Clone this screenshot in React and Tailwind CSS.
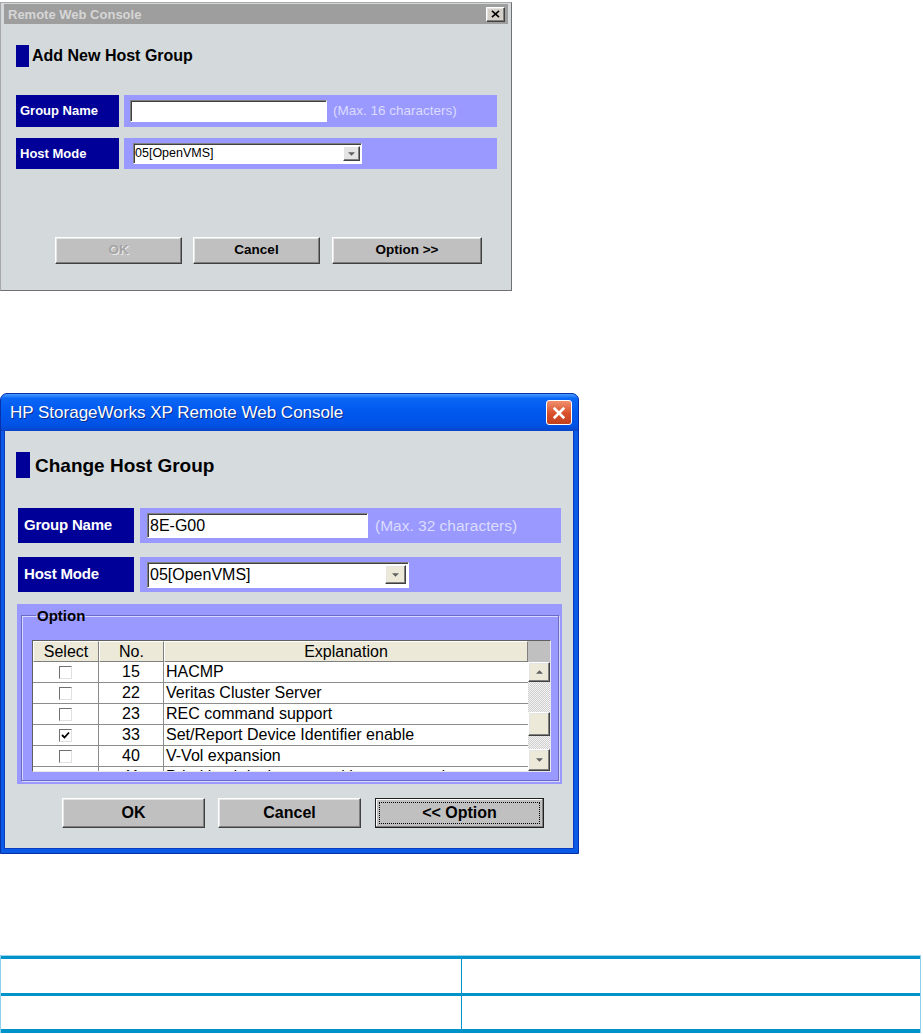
import React from 'react';

const raised =
  'border border-t-white border-l-white border-r-[#404040] border-b-[#404040] shadow-[inset_-1px_-1px_0_#808080,inset_1px_1px_0_#e4e4e4]';
const sunken =
  'border border-t-[#808080] border-l-[#808080] border-r-white border-b-white shadow-[inset_1px_1px_0_#404040]';

function Arrow({ up = false, size = 'small' }) {
  const cls = size === 'small' ? 'w-[7px] h-[4px]' : 'w-[9px] h-[5px]';
  return (
    <svg viewBox="0 0 8 4" className={cls} fill="#606060">
      {up ? <path d="M0 4 L4 0 L8 4 Z" /> : <path d="M0 0 L8 0 L4 4 Z" />}
    </svg>
  );
}

function Checkbox({ checked }) {
  return (
    <div className="w-[13px] h-[13px] bg-white border border-t-[#707070] border-l-[#707070] border-r-[#e0e0e0] border-b-[#e0e0e0] flex items-center justify-center">
      {checked && (
        <svg viewBox="0 0 9 9" className="w-[9px] h-[9px]">
          <path d="M1 4 L3.5 6.5 L8 1.5" stroke="#000" strokeWidth="1.8" fill="none" />
        </svg>
      )}
    </div>
  );
}

function FieldRow({ label, children, labelClass, stripClass, rowClass }) {
  return (
    <div className={`flex ${rowClass}`}>
      <div className={`bg-[#000099] text-white font-bold flex items-center ${labelClass}`}>{label}</div>
      <div className={`bg-[#9999ff] flex items-center ${stripClass}`}>{children}</div>
    </div>
  );
}

function AddDialog() {
  return (
    <div className="w-[512px] h-[289px] border border-[#a8a8a8] border-r-[#707070] border-b-[#707070] bg-[#d4d9dc] px-[3px] pt-[1px]">
      <div className="h-[20px] bg-[#9e9e9e] flex items-center justify-between pl-[4px] pr-[3px]">
        <span className="text-[13px] font-bold text-[#d6d6d6] leading-none">Remote Web Console</span>
        <div className={`w-[19px] h-[15px] bg-[#d4d0c8] flex items-center justify-center ${raised}`}>
          <svg viewBox="0 0 10 9" className="w-[9px] h-[8px]">
            <path d="M1 1 L9 8 M9 1 L1 8" stroke="#000" strokeWidth="1.8" />
          </svg>
        </div>
      </div>

      <div className="mt-[21px] ml-[12px] h-[22px] flex items-center gap-[3px]">
        <div className="w-[13px] h-[22px] bg-[#000099]" />
        <span className="text-[16px] font-bold text-black leading-none">Add New Host Group</span>
      </div>

      <FieldRow
        label="Group Name"
        rowClass="mt-[28px] h-[32px]"
        labelClass="ml-[12px] w-[103px] pl-[4px] text-[13px]"
        stripClass="ml-[5px] w-[373px] pl-[6px]"
      >
        <div className={`w-[197px] h-[22px] bg-white ${sunken}`} />
        <span className="ml-[6px] text-[13.5px] text-[#dcdcff]">(Max. 16 characters)</span>
      </FieldRow>

      <FieldRow
        label="Host Mode"
        rowClass="mt-[11px] h-[31px]"
        labelClass="ml-[12px] w-[103px] pl-[4px] text-[13px]"
        stripClass="ml-[5px] w-[373px] pl-[9px]"
      >
        <div className={`w-[229px] h-[21px] bg-white flex items-center justify-between pl-[1px] pr-[1px] ${sunken}`}>
          <span className="text-[12.5px] text-black">05[OpenVMS]</span>
          <div className={`w-[17px] h-[15px] bg-[#e4e4e4] flex items-center justify-center ${raised}`}>
            <Arrow />
          </div>
        </div>
      </FieldRow>

      <div className="mt-[68px] ml-[51px] flex h-[27px] text-[13.5px] font-bold">
        <div className={`w-[127px] bg-[#c0c0c0] flex items-center justify-center text-[#a4a4a4] [text-shadow:1px_1px_0_#ececec] ${raised}`}>
          OK
        </div>
        <div className={`ml-[11px] w-[127px] bg-[#c0c0c0] flex items-center justify-center text-black ${raised}`}>
          Cancel
        </div>
        <div className={`ml-[12px] w-[150px] bg-[#c0c0c0] flex items-center justify-center text-black ${raised}`}>
          Option &gt;&gt;
        </div>
      </div>
    </div>
  );
}

const rows = [
  { no: 15, text: 'HACMP', checked: false },
  { no: 22, text: 'Veritas Cluster Server', checked: false },
  { no: 23, text: 'REC command support', checked: false },
  { no: 33, text: 'Set/Report Device Identifier enable', checked: true },
  { no: 40, text: 'V-Vol expansion', checked: false },
  { no: 41, text: 'Prioritized device recognition command', checked: false },
];

function OptionTable() {
  return (
    <div className="w-[519px] h-[132px] border border-t-[#606060] border-l-[#606060] border-r-[#e8e8e8] border-b-[#e8e8e8] bg-white flex text-[16px] text-black">
      <div className="w-[495px] flex flex-col overflow-hidden">
        <div className="h-[21px] flex shrink-0">
          <div className="w-[66px] bg-[#ece9d8] border border-t-white border-l-white border-r-[#808080] border-b-[#808080] flex items-center justify-center">
            Select
          </div>
          <div className="w-[65px] bg-[#ece9d8] border border-t-white border-l-white border-r-[#808080] border-b-[#808080] flex items-center justify-center">
            No.
          </div>
          <div className="flex-1 bg-[#ece9d8] border border-t-white border-l-white border-r-[#808080] border-b-[#808080] flex items-center justify-center">
            Explanation
          </div>
        </div>
        {rows.map((r) => (
          <div key={r.no} className="h-[21px] shrink-0 flex border-b border-[#8c8c8c]">
            <div className="w-[66px] border-r border-[#8c8c8c] flex items-center justify-center">
              <Checkbox checked={r.checked} />
            </div>
            <div className="w-[65px] border-r border-[#8c8c8c] flex items-center justify-center">{r.no}</div>
            <div className="flex-1 flex items-center pl-[2px] whitespace-nowrap">{r.text}</div>
          </div>
        ))}
      </div>
      <div className="w-[22px] flex flex-col">
        <div className="h-[21px] bg-[#c0c0c0] shrink-0" />
        <div className={`h-[20px] bg-[#ece9d8] flex items-center justify-center ${raised}`}>
          <Arrow up />
        </div>
        <div className="h-[30px] bg-[repeating-conic-gradient(#cfcfcf_0_25%,#f3f3f3_0_50%)] bg-[length:2px_2px]" />
        <div className={`h-[24px] bg-[#ece9d8] ${raised}`} />
        <div className="h-[13px] bg-[repeating-conic-gradient(#cfcfcf_0_25%,#f3f3f3_0_50%)] bg-[length:2px_2px]" />
        <div className={`h-[22px] bg-[#ece9d8] flex items-center justify-center ${raised}`}>
          <Arrow />
        </div>
      </div>
    </div>
  );
}

function ChangeDialog() {
  return (
    <div className="w-[579px] h-[461px] bg-[#0a5ae6] border border-[#0831a8] rounded-t-[7px] flex flex-col">
      <div className="h-[37px] rounded-t-[6px] bg-[linear-gradient(to_bottom,#4a9bff_0%,#0a66f5_12%,#0058ee_50%,#0052e4_85%,#0a44c8_100%)] flex items-center justify-between pl-[9px] pr-[6px]">
        <span className="text-[17px] text-white [text-shadow:1px_1px_0_#0a2a8a]">HP StorageWorks XP Remote Web Console</span>
        <div className="w-[26px] h-[25px] rounded-[3px] border border-white bg-[linear-gradient(to_bottom,#f0906e,#d8502a_55%,#c3401c)] flex items-center justify-center">
          <svg viewBox="0 0 12 12" className="w-[14px] h-[14px]">
            <path d="M1.5 1.5 L10.5 10.5 M10.5 1.5 L1.5 10.5" stroke="#fff" strokeWidth="2.2" />
          </svg>
        </div>
      </div>

      <div className="ml-[3px] mr-[4px] mb-[4px] flex-1 bg-[#d6dbde] border-l border-r border-b border-[#0a3cc0]">
        <div className="mt-[21px] ml-[11px] h-[26px] flex items-center gap-[5px]">
          <div className="w-[14px] h-[26px] bg-[#000099]" />
          <span className="text-[19px] font-bold text-black leading-none">Change Host Group</span>
        </div>

        <FieldRow
          label="Group Name"
          rowClass="mt-[30px] h-[35px]"
          labelClass="ml-[13px] w-[116px] pl-[6px] text-[15px] tracking-[-0.2px]"
          stripClass="ml-[6px] w-[421px] pl-[7px]"
        >
          <div className={`w-[221px] h-[25px] bg-white flex items-center pl-[2px] ${sunken}`}>
            <span className="text-[16px] text-black">8E-G00</span>
          </div>
          <span className="ml-[7px] text-[15.5px] text-[#dcdcff]">(Max. 32 characters)</span>
        </FieldRow>

        <FieldRow
          label="Host Mode"
          rowClass="mt-[14px] h-[35px]"
          labelClass="ml-[13px] w-[116px] pl-[6px] text-[15px] tracking-[-0.2px]"
          stripClass="ml-[6px] w-[421px] pl-[7px]"
        >
          <div className={`w-[262px] h-[26px] bg-white flex items-center justify-between pl-[2px] pr-[2px] ${sunken}`}>
            <span className="text-[16px] text-black">05[OpenVMS]</span>
            <div className={`w-[21px] h-[19px] bg-[#ece9d8] flex items-center justify-center ${raised}`}>
              <Arrow />
            </div>
          </div>
        </FieldRow>

        <div className="mt-[12px] ml-[12px] w-[545px] h-[180px] bg-[#9999ff] pt-[3px] pl-[4px]">
          <fieldset className="w-[538px] h-[174px] border border-[#6b6bc4] shadow-[inset_1px_1px_0_#d8d8ff,1px_1px_0_#d8d8ff] pl-[10px] pt-[16px]">
            <legend className="ml-[4px] px-[1px] text-[15px] font-bold text-black leading-[17px]">Option</legend>
            <OptionTable />
          </fieldset>
        </div>

        <div className="mt-[14px] ml-[57px] flex h-[30px] text-[16px] font-bold text-black">
          <div className={`w-[143px] bg-[#c0c0c0] flex items-center justify-center ${raised}`}>OK</div>
          <div className={`ml-[13px] w-[143px] bg-[#c0c0c0] flex items-center justify-center ${raised}`}>Cancel</div>
          <div className="ml-[14px] w-[169px] bg-[#c0c0c0] border border-[#202020] p-[3px] shadow-[inset_-1px_-1px_0_#808080,inset_1px_1px_0_#ffffff]">
            <div className="h-full border border-dotted border-black flex items-center justify-center">&lt;&lt; Option</div>
          </div>
        </div>
      </div>
    </div>
  );
}

function BlankTable() {
  return (
    <div className="w-[921px] border-x border-[#8ed0ec]">
      <div className="h-[4px] bg-[#0093c9] border-t border-[#9ad6ee]" />
      <div className="h-[34px] flex bg-white">
        <div className="w-[461px] border-r border-[#0093c9]" />
        <div className="flex-1" />
      </div>
      <div className="h-[3px] bg-[#0093c9]" />
      <div className="h-[33px] flex bg-white">
        <div className="w-[461px] border-r border-[#0093c9]" />
        <div className="flex-1" />
      </div>
      <div className="h-[4px] bg-[#0093c9]" />
    </div>
  );
}

export default function App() {
  return (
    <div className="w-[923px] h-[1034px] bg-white pt-[2px] font-['Liberation_Sans',Arial,sans-serif] overflow-hidden">
      <AddDialog />
      <div className="mt-[102px]">
        <ChangeDialog />
      </div>
      <div className="mt-[101px]">
        <BlankTable />
      </div>
    </div>
  );
}
